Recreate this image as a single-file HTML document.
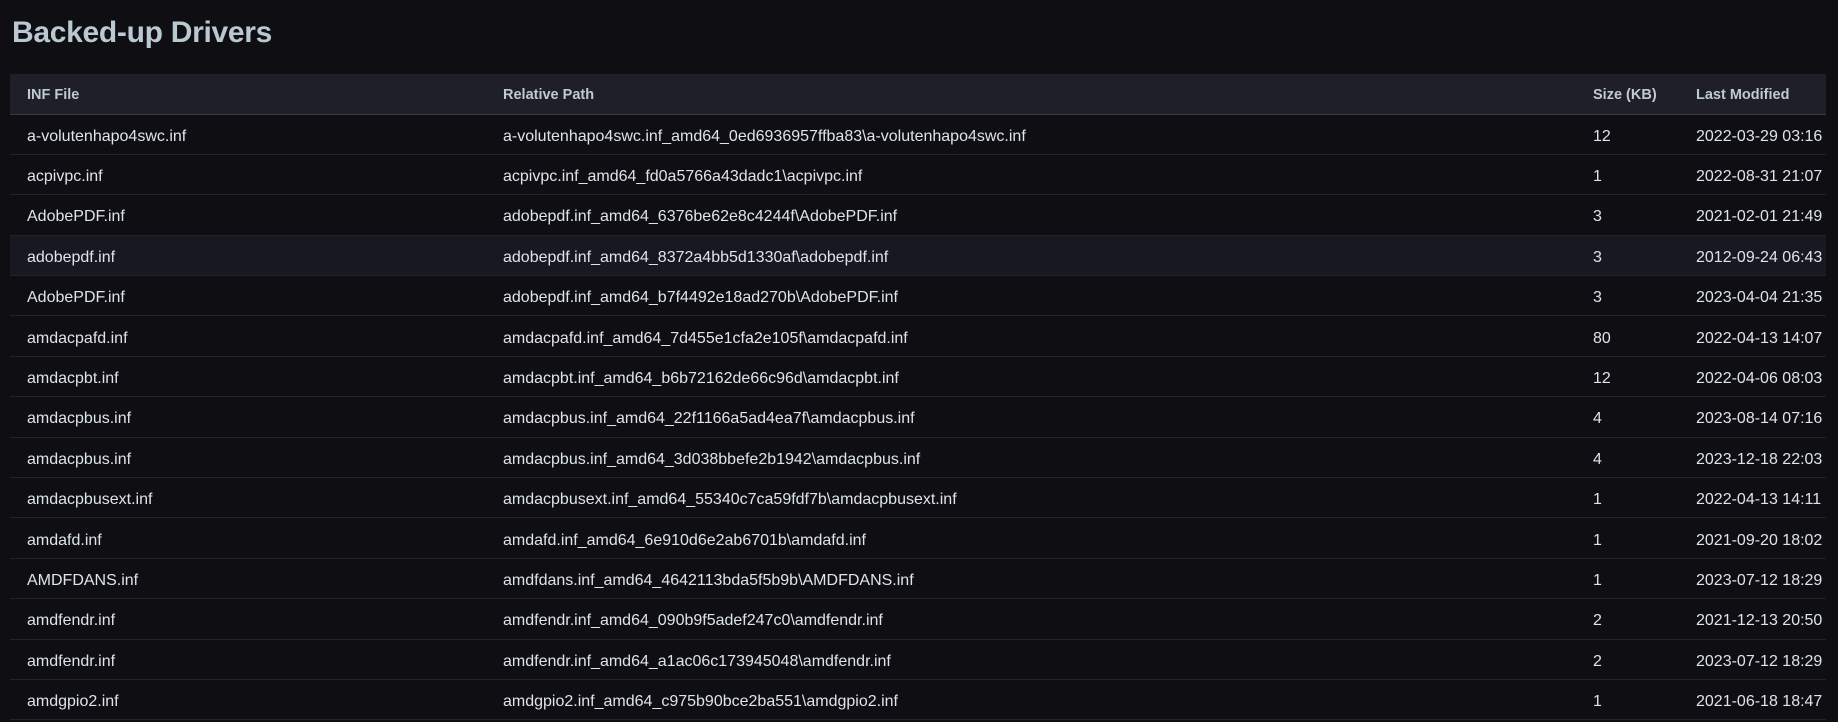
<!DOCTYPE html>
<html><head><meta charset="utf-8"><style>
html,body{margin:0;padding:0;background:#0e0e13;width:1838px;height:722px;overflow:hidden;font-family:"Liberation Sans",sans-serif;}
h1{position:absolute;left:12px;top:16px;margin:0;font-size:30px;font-weight:bold;color:#bac9d1;letter-spacing:-0.3px;}
table{position:absolute;left:10px;top:74px;width:1816px;border-collapse:collapse;table-layout:fixed;font-size:16px;color:#dde4ea;}
th{background:#1e1f27;color:#bfcad2;font-weight:bold;text-align:left;height:40px;border-bottom:1px solid #3a3b42;padding:2px 0 0 17px;font-size:14.5px;box-sizing:border-box;}
td{height:40.4px;border-bottom:1px solid #23242b;padding:5px 0 0 17px;white-space:nowrap;box-sizing:border-box;}
tr.h td{background:#181820;}
</style></head><body>
<h1>Backed-up Drivers</h1>
<table>
<colgroup><col style="width:476px"><col style="width:1090px"><col style="width:103px"><col></colgroup>
<tr><th>INF File</th><th>Relative Path</th><th>Size (KB)</th><th>Last Modified</th></tr>
<tr><td>a-volutenhapo4swc.inf</td><td>a-volutenhapo4swc.inf_amd64_0ed6936957ffba83\a-volutenhapo4swc.inf</td><td>12</td><td>2022-03-29 03:16</td></tr>
<tr><td>acpivpc.inf</td><td>acpivpc.inf_amd64_fd0a5766a43dadc1\acpivpc.inf</td><td>1</td><td>2022-08-31 21:07</td></tr>
<tr><td>AdobePDF.inf</td><td>adobepdf.inf_amd64_6376be62e8c4244f\AdobePDF.inf</td><td>3</td><td>2021-02-01 21:49</td></tr>
<tr class="h"><td>adobepdf.inf</td><td>adobepdf.inf_amd64_8372a4bb5d1330af\adobepdf.inf</td><td>3</td><td>2012-09-24 06:43</td></tr>
<tr><td>AdobePDF.inf</td><td>adobepdf.inf_amd64_b7f4492e18ad270b\AdobePDF.inf</td><td>3</td><td>2023-04-04 21:35</td></tr>
<tr><td>amdacpafd.inf</td><td>amdacpafd.inf_amd64_7d455e1cfa2e105f\amdacpafd.inf</td><td>80</td><td>2022-04-13 14:07</td></tr>
<tr><td>amdacpbt.inf</td><td>amdacpbt.inf_amd64_b6b72162de66c96d\amdacpbt.inf</td><td>12</td><td>2022-04-06 08:03</td></tr>
<tr><td>amdacpbus.inf</td><td>amdacpbus.inf_amd64_22f1166a5ad4ea7f\amdacpbus.inf</td><td>4</td><td>2023-08-14 07:16</td></tr>
<tr><td>amdacpbus.inf</td><td>amdacpbus.inf_amd64_3d038bbefe2b1942\amdacpbus.inf</td><td>4</td><td>2023-12-18 22:03</td></tr>
<tr><td>amdacpbusext.inf</td><td>amdacpbusext.inf_amd64_55340c7ca59fdf7b\amdacpbusext.inf</td><td>1</td><td>2022-04-13 14:11</td></tr>
<tr><td>amdafd.inf</td><td>amdafd.inf_amd64_6e910d6e2ab6701b\amdafd.inf</td><td>1</td><td>2021-09-20 18:02</td></tr>
<tr><td>AMDFDANS.inf</td><td>amdfdans.inf_amd64_4642113bda5f5b9b\AMDFDANS.inf</td><td>1</td><td>2023-07-12 18:29</td></tr>
<tr><td>amdfendr.inf</td><td>amdfendr.inf_amd64_090b9f5adef247c0\amdfendr.inf</td><td>2</td><td>2021-12-13 20:50</td></tr>
<tr><td>amdfendr.inf</td><td>amdfendr.inf_amd64_a1ac06c173945048\amdfendr.inf</td><td>2</td><td>2023-07-12 18:29</td></tr>
<tr><td>amdgpio2.inf</td><td>amdgpio2.inf_amd64_c975b90bce2ba551\amdgpio2.inf</td><td>1</td><td>2021-06-18 18:47</td></tr>
</table>
</body></html>
